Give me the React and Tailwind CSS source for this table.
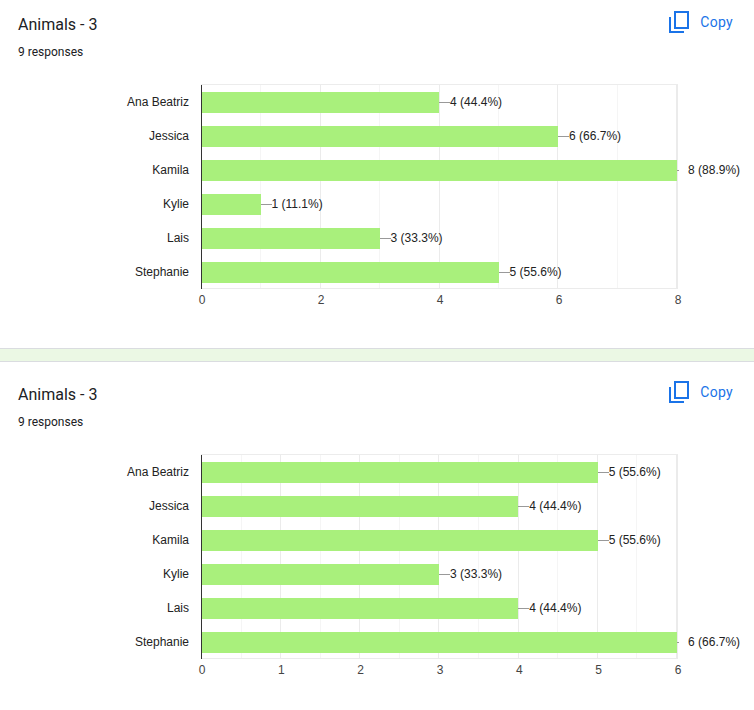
import React from "react";

const PLOT_W = 476;

const charts = [
  {
    title: "Animals - 3",
    responses: 9,
    max: 8,
    ticks: [0, 2, 4, 6, 8],
    gridStep: 1, // linhas a cada unidade, maior a cada 2
    majorEvery: 2,
    rows: [
      { name: "Ana Beatriz", value: 4 },
      { name: "Jessica", value: 6 },
      { name: "Kamila", value: 8 },
      { name: "Kylie", value: 1 },
      { name: "Lais", value: 3 },
      { name: "Stephanie", value: 5 },
    ],
  },
  {
    title: "Animals - 3",
    responses: 9,
    max: 6,
    ticks: [0, 1, 2, 3, 4, 5, 6],
    gridStep: 0.5,
    majorEvery: 2,
    rows: [
      { name: "Ana Beatriz", value: 5 },
      { name: "Jessica", value: 4 },
      { name: "Kamila", value: 5 },
      { name: "Kylie", value: 3 },
      { name: "Lais", value: 4 },
      { name: "Stephanie", value: 6 },
    ],
  },
];

const pct = (v, total) => ((v / total) * 100).toFixed(1) + "%";

const CopyIcon = () => (
  <svg width="20" height="22" viewBox="0 0 20 22" fill="none" stroke="#1a73e8" strokeWidth="2">
    <rect x="6" y="1" width="13" height="16" />
    <path d="M1 6V21H15" />
  </svg>
);

const Chart = ({ chart }) => {
  const unit = PLOT_W / chart.max;
  const lineCount = Math.round(chart.max / chart.gridStep) + 1;
  const lines = Array.from({ length: lineCount }, (_, i) => i);

  return (
    <div className="font-['Liberation_Sans',Arial,sans-serif] text-[12px]">
      <div className="flex">
        {/* nomes */}
        <div className="w-[201px] shrink-0 pt-px">
          {chart.rows.map((r) => (
            <div key={r.name} className="h-[34px] flex items-center justify-end pr-[12px] text-[#222]">
              {r.name}
            </div>
          ))}
        </div>

        {/* área do gráfico */}
        <div className="relative w-[477px] shrink-0 border-t border-[#ececec]">
          <div className="absolute inset-0 flex justify-between">
            {lines.map((i) => (
              <div
                key={i}
                className={
                  i === 0
                    ? "w-px bg-[#333]"
                    : i === lineCount - 1
                    ? "w-[2px] bg-[#ebebeb]"
                    : i % chart.majorEvery === 0
                    ? "w-px bg-[#ebebeb]"
                    : "w-px bg-[#f5f5f5]"
                }
              />
            ))}
          </div>
          <div className="absolute left-px right-0 bottom-0 h-px bg-[#ebebeb]" />
          <div className="relative pl-px">
            {chart.rows.map((r) => {
              const full = r.value === chart.max;
              return (
                <div key={r.name} className="h-[34px] flex items-center">
                  <div className="h-[21px] shrink-0 bg-[#a9f07c]" style={{ width: r.value * unit - 1 }} />
                  {full ? (
                    <div className="w-[11px] shrink-0 flex">
                      <div className="w-[2px] h-px bg-[#999]" />
                    </div>
                  ) : (
                    <div className="w-[11px] shrink-0 h-px bg-[#999]" />
                  )}
                  <span className="whitespace-nowrap shrink-0 text-[#222] leading-none">
                    {r.value} ({pct(r.value, chart.responses)})
                  </span>
                </div>
              );
            })}
          </div>
        </div>
      </div>

      {/* eixo x */}
      <div className="flex mt-[3px]">
        <div className="w-[202px] shrink-0" />
        <div className="w-[476px] shrink-0 flex justify-between">
          {chart.ticks.map((t) => (
            <div key={t} className="w-0 flex justify-center">
              <span className="leading-[16px] text-[#444]">{t}</span>
            </div>
          ))}
        </div>
      </div>
    </div>
  );
};

const Section = ({ chart, top }) => (
  <div className={top}>
    <div className="flex items-start justify-between pl-[18px] pr-[21px]">
      <h2 className="pt-[3px] text-[16px] leading-[24px] text-[#202124] font-['Roboto',sans-serif]">
        {chart.title}
      </h2>
      <button className="h-[24px] flex items-center gap-[11px] text-[#1a73e8] text-[14px] tracking-[0.3px] font-['Roboto',sans-serif]">
        <CopyIcon />
        <span>Copy</span>
      </button>
    </div>
    <p className="mt-[7px] pl-[18px] text-[12px] leading-[16px] text-[#202124] font-['Roboto',sans-serif]">
      {chart.responses} responses
    </p>
    <div className="mt-[24px]">
      <Chart chart={chart} />
    </div>
  </div>
);

export default function App() {
  return (
    <div className="w-[754px] h-[710px] bg-white overflow-hidden">
      <Section chart={charts[0]} top="pt-[10px] pb-[40px]" />
      <div className="h-[14px] bg-[#ebf8e4] border-t border-b border-[#dadce0]" />
      <Section chart={charts[1]} top="pt-[18px]" />
    </div>
  );
}
